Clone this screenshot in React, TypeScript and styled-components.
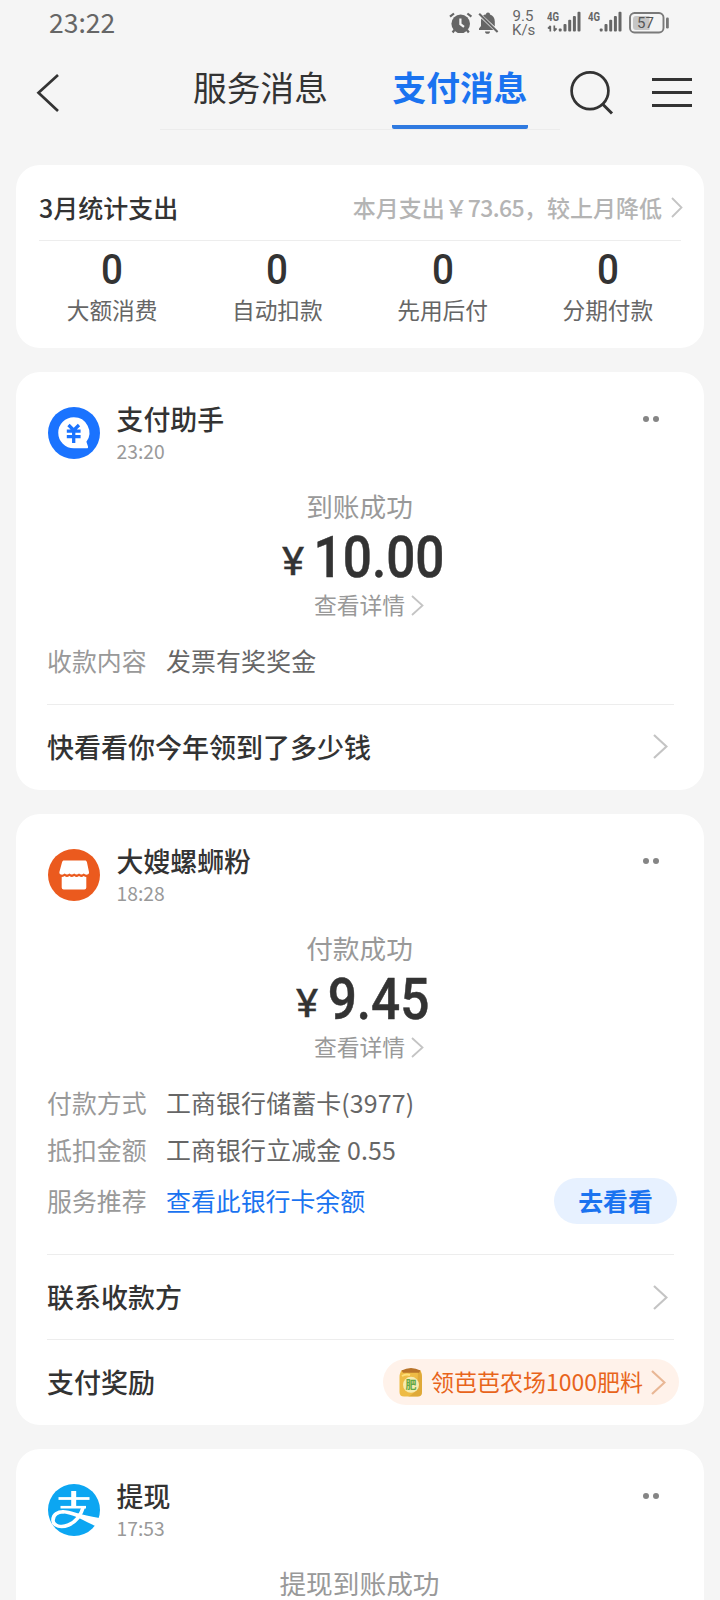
import React from 'react';
import styled, { createGlobalStyle } from 'styled-components';

const GlobalStyle = createGlobalStyle`
  * { box-sizing: border-box; }
  body {
    margin: 0;
    background: #f5f5f5;
    color: #333;
    font-family: "Noto Sans CJK SC", "Noto Sans", sans-serif;
  }
  svg { display: block; flex: none; }
`;

const Page = styled.div`
  width: 720px;
  height: 1600px;
  overflow: hidden;
  background: #f5f5f5;
`;

const StatusBar = styled.header`
  display: flex;
  align-items: center;
  height: 46px;
  padding: 0 50px 0 49px;
  color: #666;
`;

const Clock = styled.span`
  flex: 1;
  font-size: 26.5px;
  line-height: 44px;
  padding-bottom: 2px;
`;

const Speed = styled.span`
  display: flex;
  flex-direction: column;
  width: 22px;
  margin: 0 13px 0 13px;
  font-family: Roboto, sans-serif;
  font-size: 15px;
  line-height: 14px;
  text-align: center;
`;

const Radios = styled.span`
  display: flex;
  gap: 7px;
  margin-right: 7px;
`;

const Nav = styled.nav`
  display: flex;
  height: 84px;
  padding-left: 35px;
`;

const NavIcon = styled.button<{ $width: number }>`
  width: ${(p) => p.$width}px;
  height: 84px;
  padding: 0;
  border: 0;
  background: none;
  color: #333;
`;

const Tabs = styled.div`
  display: flex;
  gap: 63px;
  width: 400px;
  padding-left: 33px;
  border-bottom: 1px solid #ececec;
`;

const Tab = styled.span<{ $active?: boolean }>`
  width: 136px;
  height: 83px;
  font-size: 33.7px;
  line-height: 81px;
  text-align: center;
  text-indent: ${(p) => (p.$active ? 0 : -1)}px;
  white-space: nowrap;
  color: ${(p) => (p.$active ? '#1a73f0' : '#333')};
  font-weight: ${(p) => (p.$active ? 700 : 400)};
  border-bottom: ${(p) => (p.$active ? '4px solid #2f7ae0' : '0')};
  border-radius: 2px;
`;

const Feed = styled.main`
  display: flex;
  flex-direction: column;
  gap: 24px;
  padding: 35px 16px 0;
`;

const Card = styled.section<{ $height: number }>`
  flex: none;
  height: ${(p) => p.$height}px;
  border-radius: 24px;
  background: #fff;
`;

const SummaryHead = styled.div`
  display: flex;
  align-items: center;
  height: 76px;
  margin: 0 23px;
  padding-top: 8px;
  border-bottom: 1px solid #ededed;
`;

const SummaryTitle = styled.h2`
  flex: 1;
  margin: 0;
  font-size: 25px;
  line-height: 36px;
  font-weight: 500;
`;

const SummaryNote = styled.span`
  display: flex;
  align-items: center;
  margin-right: -2px;
  font-size: 23px;
  line-height: 36px;
  font-weight: 500;
  color: #b4b4b4;

  b {
    font-weight: 500;
    letter-spacing: -0.6px;
  }

  svg {
    margin-left: 9px;
    margin-top: 1px;
  }
`;

const Stats = styled.div`
  display: grid;
  grid-template-columns: repeat(4, 1fr);
  padding: 7px 13.5px 0;
`;

const Stat = styled.div`
  display: flex;
  flex-direction: column;
  align-items: center;
`;

const StatValue = styled.strong`
  font-family: Roboto, sans-serif;
  font-size: 42px;
  line-height: 44px;
  font-weight: 500;
  transform: scaleX(0.92);
`;

const StatLabel = styled.span`
  margin-top: 2px;
  font-size: 22.7px;
  line-height: 32px;
  color: #666;
`;

const CardHead = styled.div`
  display: flex;
  padding: 30px 45px 0 31.5px;
  height: 94px;
`;

const Avatar = styled.div`
  width: 52px;
  height: 52px;
  margin: 5px 17px 0 0;
`;

const Who = styled.div`
  flex: 1;
`;

const Name = styled.h3`
  margin: 0;
  font-size: 26.9px;
  line-height: 33px;
  font-weight: 500;
`;

const Time = styled.div`
  font-size: 19.3px;
  line-height: 32px;
  color: #999;
`;

const More = styled.div`
  display: flex;
  gap: 4px;
  padding-top: 14px;

  i {
    width: 6px;
    height: 6px;
    border-radius: 50%;
    background: #858585;
  }
`;

const Result = styled.div`
  display: flex;
  flex-direction: column;
  align-items: center;
  padding-top: 20px;
`;

const ResultTitle = styled.div`
  font-size: 26.7px;
  line-height: 40px;
  text-indent: -1px;
  color: #999;
`;

/* Condensed numerals: the whole sum is narrowed around its centre. */
const Amount = styled.div`
  display: flex;
  height: 63px;
  padding-left: 9px;
  font-family: Roboto, sans-serif;
  font-weight: 500;
  color: #333;
  transform: scaleX(0.885);
`;

const Currency = styled.span`
  margin-right: 13px;
  padding-top: 9px;
  font-size: 39px;
  line-height: 54px;
  font-weight: 400;
  -webkit-text-stroke: 0.4px #333;
  transform: scaleX(1.22);
`;

const Figure = styled.span`
  font-size: 58px;
  line-height: 63px;
  -webkit-text-stroke: 0.5px #333;
`;

const DetailLink = styled.a`
  display: flex;
  align-items: center;
  gap: 6px;
  margin-left: 18px;
  font-size: 22.8px;
  line-height: 32px;
  color: #999;
`;

const Fields = styled.dl<{ $height: number }>`
  height: ${(p) => p.$height}px;
  margin: 0;
  padding: 15px 27px 0 31px;
`;

const Field = styled.div<{ $height?: number }>`
  display: flex;
  align-items: center;
  height: ${(p) => p.$height ?? 47}px;
  font-size: 24.9px;
  line-height: 36px;
`;

const Label = styled.dt`
  width: 119px;
  color: #999;
`;

const Value = styled.dd<{ $link?: boolean }>`
  flex: 1;
  margin: 0;
  letter-spacing: ${(p) => (p.$link ? 0 : 0.15)}px;
  color: ${(p) => (p.$link ? '#1a73f0' : '#666')};
`;

const GoButton = styled.button`
  width: 123px;
  height: 46px;
  margin-top: 1px;
  padding: 0 0 2px;
  border: 0;
  border-radius: 23px;
  background: #e7f1ff;
  color: #1a73f0;
  font-family: inherit;
  font-size: 24.8px;
  line-height: 42px;
  font-weight: 700;
`;

const Action = styled.div<{ $height: number }>`
  display: flex;
  align-items: center;
  justify-content: space-between;
  height: ${(p) => p.$height}px;
  margin: 0 30px 0 31px;
  padding-right: 6px;
  border-top: 1px solid #ededed;
  font-size: 27px;
  line-height: 38px;
  font-weight: 500;
`;

const RewardAction = styled(Action)`
  padding-bottom: 1px;
`;

const ActionText = styled.span`
  padding-bottom: 1px;
`;

const Promo = styled.span`
  display: flex;
  align-items: center;
  width: 296px;
  height: 46px;
  margin-right: -11px;
  padding: 0 13px 0 15px;
  border-radius: 23px;
  background: #fff2ea;
  color: #e8641b;
  font-size: 23px;
  font-weight: 400;
  white-space: nowrap;
`;

const PromoText = styled.span`
  flex: 1;
  margin-left: 7px;
  padding-bottom: 2px;
`;

const Chevron = ({ w, h, color = '#c4c4c4', stroke = 2.2 }: { w: number; h: number; color?: string; stroke?: number }) => (
  <svg width={w} height={h} viewBox={`0 0 ${w} ${h}`} fill="none" stroke={color} strokeWidth={stroke}>
    <path d={`M1 1 L${w - 1.5} ${h / 2} L1 ${h - 1}`} />
  </svg>
);

const StatusIcons = () => (
  <svg width="50" height="24" viewBox="0 0 50 24" fill="#666">
    <circle cx="11.7" cy="12.8" r="9.3" />
    <path d="M1 5.7 L5 2.500 M22.4 5.7 L18.4 2.500 M5.4 19 L3.6 21.500 M18 19 L19.8 21.500" stroke="#666" strokeWidth="2.2" fill="none" />
    <path d="M11.4 7.500 V13.100 L15 15.900" stroke="#f5f5f5" strokeWidth="2.2" fill="none" />
    <path d="M39 1.500 c1.4 0 2 .9 2 2.1 c3 .9 4.800 3.300 4.800 6.800 v5 L34 4.600 c.9-.7 1.700-1 3-1.100 C37 2.400 37.600 1.500 39 1.500z" />
    <path d="M32.400 7.400 L44.400 19 H30 v-1.600 l2-2.300 v-4.700 c0-1.300.1-2.200.4-3z" />
    <path d="M36 20.500 h5 c0 1.500-1 2.300-2.500 2.300 S36 22 36 20.500z" />
    <path d="M30.200 2.800 L48.600 20.900" stroke="#666" strokeWidth="2.100" />
  </svg>
);

const Signal = ({ data }: { data?: boolean }) => (
  <svg width="34" height="24" viewBox="0 0 34 24" fill="#666">
    <text x="0" y="9.700" fontFamily="Roboto, sans-serif" fontWeight="700" fontSize="12" textLength="12" lengthAdjust="spacingAndGlyphs">4G</text>
    {data && <path d="M3.300 20.500 V15 M1 17.500 L3.600 14.800 M7.300 14.500 V20 M9.600 17.400 L7 20.200" stroke="#666" strokeWidth="1.700" fill="none" />}
    <rect x="11.800" y="17.500" width="2.800" height="3" rx=".8" />
    <rect x="16.500" y="13" width="3" height="7.500" rx="1" />
    <rect x="21.200" y="8.800" width="3" height="11.700" rx="1" />
    <rect x="25.900" y="5" width="3" height="15.500" rx="1" />
    <rect x="30.500" y=".8" width="3" height="19.700" rx="1" />
  </svg>
);

const Battery = () => (
  <svg width="41" height="22" viewBox="0 0 41 22">
    <rect x="1" y="1" width="33.500" height="19.500" rx="4.500" fill="none" stroke="#7a7a7a" strokeWidth="1.900" />
    <path d="M7 4 H20.500 V18 H7 a3 3 0 0 1-3-3 V7 a3 3 0 0 1 3-3z" fill="#c6c6c6" />
    <rect x="37" y="5.500" width="2.800" height="11" rx="1.200" fill="#777" />
    <text x="16.500" y="15.900" textAnchor="middle" fontFamily="Roboto, sans-serif" fontSize="15" fill="#555">57</text>
  </svg>
);

const BackIcon = () => (
  <svg width="30" height="84" viewBox="0 0 30 84" fill="none" stroke="currentColor" strokeWidth="2.700">
    <path d="M23 29 L3.500 46.800 L23 65" />
  </svg>
);

const SearchIcon = () => (
  <svg width="72" height="84" viewBox="0 0 72 84" fill="none" stroke="currentColor" strokeWidth="2.700">
    <circle cx="30" cy="44.800" r="18.400" />
    <path d="M42.500 58 L52 67.500" strokeWidth="3" />
  </svg>
);

const MenuIcon = () => (
  <svg width="60" height="84" viewBox="0 0 60 84" fill="none" stroke="currentColor" strokeWidth="2.800">
    <path d="M20 33.500 H60 M20 46.500 H60 M20 59.500 H60" />
  </svg>
);

const AssistantLogo = () => (
  <svg width="52" height="52" viewBox="0 0 52 52">
    <circle cx="26" cy="26" r="26" fill="#1a73ff" />
    <path d="M25.800 10.200 a15.500 15.500 0 0 1 12.600 24.600 l1.600 4.600 c.3 1.200-.2 1.900-1.300 1.900 H25.800 a15.500 15.500 0 0 1 0-31.100z" fill="#fff" />
    <path d="M20.500 18 L25.700 23.200 L31 18 M18.800 24.200 H32.600 M18.800 29.600 H32.600 M25.700 23 V36" fill="none" stroke="#1a73ff" strokeWidth="3.300" />
  </svg>
);

const ShopLogo = () => (
  <svg width="52" height="52" viewBox="0 0 52 52">
    <circle cx="26" cy="26" r="26" fill="#eb5a1e" />
    <path d="M16 11.500 H37 c1 0 1.600.6 1.900 1.500 L41 23 c.2 1.300-.5 2.300-1.700 2.600 q-2 .5-3.600-1 q-2.200 1.800-4.700 0 q-2.400 1.800-4.800 0 q-2.400 1.800-4.800 0 q-2.400 1.800-4.700 0 q-1.600 1.500-3.600 1 c-1.200-.3-1.900-1.300-1.700-2.600 L14.100 13 c.3-.9.900-1.500 1.900-1.500z" fill="#fff" />
    <path d="M13.700 28 q1.600 0 3-1 q2.200 1.800 4.700 0 q2.400 1.800 4.800 0 q2.400 1.800 4.800 0 q2.500 1.800 4.700 0 q1.200 1 2.600 1 V38.500 a2 2 0 0 1-2 2 H15.700 a2 2 0 0 1-2-2z" fill="#fff" />
  </svg>
);

const AlipayLogo = () => (
  <svg width="52" height="52" viewBox="0 0 52 52">
    <circle cx="26" cy="26" r="26" fill="#0ca6f2" />
    <g fill="none" stroke="#fff">
      <path d="M10.500 14.500 H41.500" strokeWidth="2.800" />
      <path d="M12.500 23.200 H38" strokeWidth="2.600" />
      <path d="M25.700 7 V23" strokeWidth="5" />
      <path d="M35.500 22.500 C33 31 27.500 38 20.500 41 C13.500 44 5.500 42.500 5 36.500 C4.800 30.500 10 27.500 16 27.800" strokeWidth="3.600" />
    </g>
    <path d="M14 26 C22 25.800 32 31 51.300 34 C50.800 37.500 49.800 39.700 48 42.300 C37 37.500 24 29.500 14 29.300z" fill="#fff" />
  </svg>
);

const FertilizerIcon = () => (
  <svg width="26" height="32" viewBox="0 0 26 32">
    <path d="M4 4 H22 c1.500 2 2 4 2 7 V26 c0 3-1.500 4.500-4.500 4.500 H6 c-3 0-4.500-1.500-4.500-4.500 V11 c0-3 .8-5 2.500-7z" fill="#eebb45" />
    <path d="M20 5 H22 c1.500 2 2 4 2 7 V26 c0 3-1.500 4.500-4.500 4.500 H10 Q20 28 20 5z" fill="#d69d30" opacity=".6" />
    <path d="M3.500 4.500 Q13 -.5 22.500 4.500 L21 6.800 H5z" fill="#b87329" />
    <path d="M4 10 Q8 7.500 12 9" stroke="#ffe17a" strokeWidth="2" fill="none" />
    <circle cx="13" cy="18.800" r="8" fill="#f6ebb0" />
    <text x="13" y="23" textAnchor="middle" fontSize="11" fontWeight="700" fill="#65a843">肥</text>
  </svg>
);

type HeadProps = { logo: React.ReactNode; name: string; time: string };

const MessageHead = ({ logo, name, time }: HeadProps) => (
  <CardHead>
    <Avatar>{logo}</Avatar>
    <Who>
      <Name>{name}</Name>
      <Time>{time}</Time>
    </Who>
    <More><i /><i /></More>
  </CardHead>
);

const MessageResult = ({ title, amount }: { title: string; amount?: string }) => (
  <Result>
    <ResultTitle>{title}</ResultTitle>
    {amount && (
      <>
        <Amount>
          <Currency>¥</Currency>
          <Figure>{amount}</Figure>
        </Amount>
        <DetailLink>
          查看详情
          <Chevron w={13} h={21} stroke={1.8} />
        </DetailLink>
      </>
    )}
  </Result>
);

const stats = ['大额消费', '自动扣款', '先用后付', '分期付款'];

export default function App() {
  return (
    <Page>
      <GlobalStyle />
      <StatusBar>
        <Clock>23:22</Clock>
        <StatusIcons />
        <Speed>
          <span>9.5</span>
          <span>K/s</span>
        </Speed>
        <Radios>
          <Signal data />
          <Signal />
        </Radios>
        <Battery />
      </StatusBar>
      <Nav>
        <NavIcon $width={125} aria-label="返回"><BackIcon /></NavIcon>
        <Tabs>
          <Tab>服务消息</Tab>
          <Tab $active>支付消息</Tab>
        </Tabs>
        <NavIcon $width={72} aria-label="搜索"><SearchIcon /></NavIcon>
        <NavIcon $width={60} aria-label="菜单"><MenuIcon /></NavIcon>
      </Nav>
      <Feed>
        <Card $height={183}>
          <SummaryHead>
            <SummaryTitle>3月统计支出</SummaryTitle>
            <SummaryNote>
              本月支出￥<b>73.65</b>，较上月降低
              <Chevron w={12} h={21} stroke={1.8} />
            </SummaryNote>
          </SummaryHead>
          <Stats>
            {stats.map((label) => (
              <Stat key={label}>
                <StatValue>0</StatValue>
                <StatLabel>{label}</StatLabel>
              </Stat>
            ))}
          </Stats>
        </Card>

        <Card $height={418}>
          <MessageHead logo={<AssistantLogo />} name="支付助手" time="23:20" />
          <MessageResult title="到账成功" amount="10.00" />
          <Fields $height={83}>
            <Field>
              <Label>收款内容</Label>
              <Value>发票有奖奖金</Value>
            </Field>
          </Fields>
          <Action $height={84}>
            快看看你今年领到了多少钱
            <Chevron w={15} h={25} />
          </Action>
        </Card>

        <Card $height={611}>
          <MessageHead logo={<ShopLogo />} name="大嫂螺蛳粉" time="18:28" />
          <MessageResult title="付款成功" amount="9.45" />
          <Fields $height={191}>
            <Field>
              <Label>付款方式</Label>
              <Value>工商银行储蓄卡(3977)</Value>
            </Field>
            <Field>
              <Label>抵扣金额</Label>
              <Value>工商银行立减金 0.55</Value>
            </Field>
            <Field $height={56}>
              <Label>服务推荐</Label>
              <Value $link>查看此银行卡余额</Value>
              <GoButton>去看看</GoButton>
            </Field>
          </Fields>
          <Action $height={85}>
            联系收款方
            <Chevron w={15} h={25} />
          </Action>
          <RewardAction $height={86}>
            <ActionText>支付奖励</ActionText>
            <Promo>
              <FertilizerIcon />
              <PromoText>领芭芭农场1000肥料</PromoText>
              <Chevron w={15} h={25} color="#e9b795" />
            </Promo>
          </RewardAction>
        </Card>

        <Card $height={200}>
          <MessageHead logo={<AlipayLogo />} name="提现" time="17:53" />
          <MessageResult title="提现到账成功" />
        </Card>
      </Feed>
    </Page>
  );
}
